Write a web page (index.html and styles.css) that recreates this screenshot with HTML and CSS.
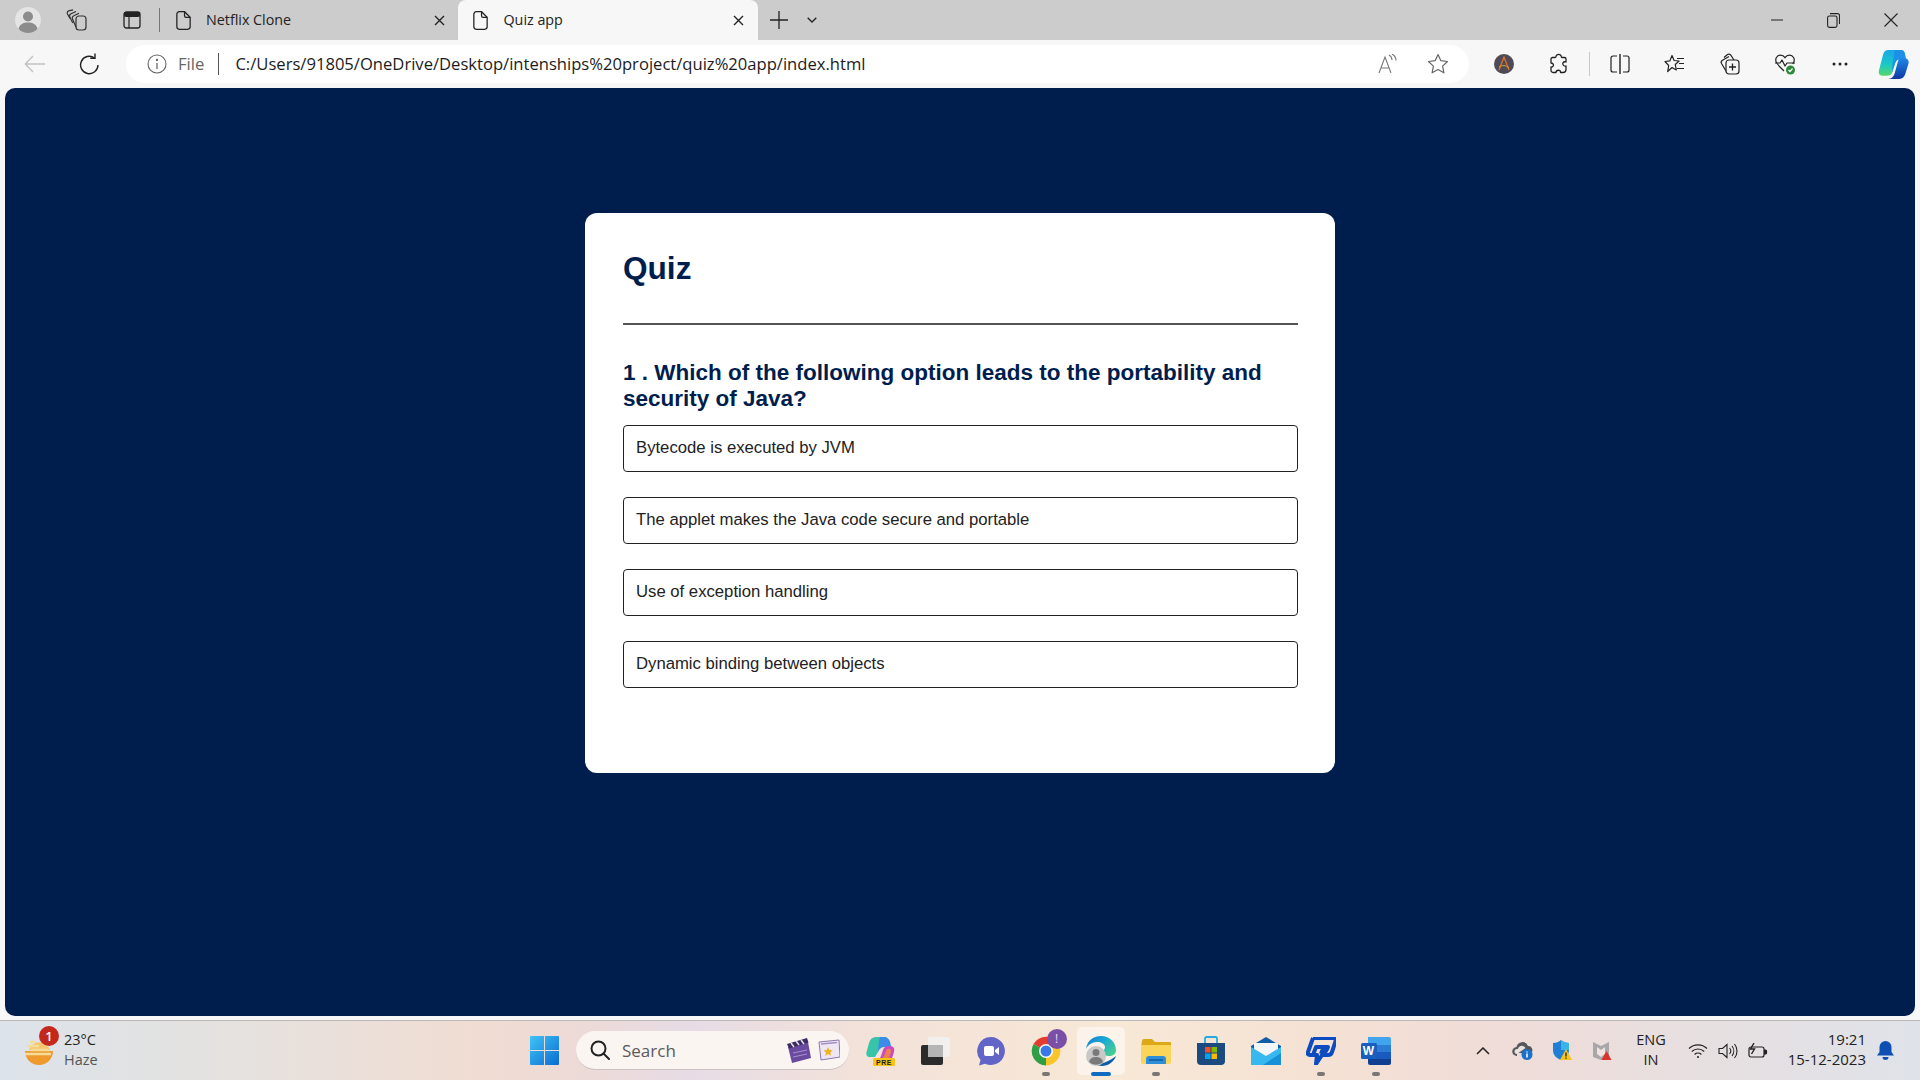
FILE: index.html
```html
<!DOCTYPE html>
<html lang="en">
<head>
<meta charset="utf-8">
<title>Quiz app</title>
<link rel="stylesheet" href="styles.css">
</head>
<body>
<div class="window">
  <header class="tabstrip">
    <div class="strip-tool profile-cell">
      <svg width="26" height="26" viewBox="0 0 26 26"><circle cx="13" cy="13" r="13" fill="#e4e4e4"/><circle cx="13" cy="9.5" r="5" fill="#8c8c8c"/><path d="M3.5 22c1-5 5-6.500 9.500-6.500s8.500 1.500 9.500 6.500c-2.500 2.500-6 4-9.500 4s-7-1.500-9.500-4z" fill="#8c8c8c"/></svg>
    </div>
    <div class="strip-tool coll-cell">
      <svg width="22" height="22" viewBox="0 0 22 22" fill="none" stroke="#333" stroke-width="1.200"><rect x="10" y="7" width="10" height="14" rx="3"/><path d="M10 18 6.500 10a2.500 2.500 0 0 1 1.300-3.300L13 4.300"/><path d="M6.800 14 3.800 8a2.500 2.500 0 0 1 1.200-3.300L10 2.500"/><path d="M4 9.500 1.500 5a2.500 2.500 0 0 1 1.200-3.200L7 .8"/></svg>
    </div>
    <div class="strip-tool vtab-cell">
      <svg width="18" height="18" viewBox="0 0 18 18"><rect x="1" y="1" width="16" height="16" rx="2.500" fill="none" stroke="#222" stroke-width="1.300"/><rect x="1" y="1" width="16" height="5" rx="2" fill="#222"/><path d="M6 6v11" stroke="#222" stroke-width="1.200"/></svg>
    </div>
    <div class="strip-sep"></div>
    <div class="tab">
      <svg class="doc" width="15" height="19" viewBox="0 0 14 18" fill="none" stroke="#222" stroke-width="1.200"><path d="M3 .7h5l5.300 5.300v9a2.300 2.300 0 0 1-2.300 2.300H3A2.300 2.300 0 0 1 .7 15V3A2.300 2.300 0 0 1 3 .7z"/><path d="M8 .7V4.500A1.500 1.500 0 0 0 9.500 6h3.800"/></svg>
      <span class="tab-title">Netflix Clone</span>
      <svg class="tab-close" width="11" height="11" viewBox="0 0 11 11" stroke="#222" stroke-width="1.400"><path d="M1 1l9 9M10 1l-9 9"/></svg>
    </div>
    <div class="tab tab-active">
      <svg class="doc" width="15" height="19" viewBox="0 0 14 18" fill="none" stroke="#222" stroke-width="1.200"><path d="M3 .7h5l5.300 5.300v9a2.300 2.300 0 0 1-2.300 2.300H3A2.300 2.300 0 0 1 .7 15V3A2.300 2.300 0 0 1 3 .7z"/><path d="M8 .7V4.500A1.500 1.500 0 0 0 9.500 6h3.800"/></svg>
      <span class="tab-title">Quiz app</span>
      <svg class="tab-close" width="11" height="11" viewBox="0 0 11 11" stroke="#222" stroke-width="1.400"><path d="M1 1l9 9M10 1l-9 9"/></svg>
    </div>
    <div class="strip-tool plus-cell">
      <svg width="18" height="18" viewBox="0 0 18 18" stroke="#222" stroke-width="1.300"><path d="M9 0v18M0 9h18"/></svg>
    </div>
    <div class="strip-tool chev-cell">
      <svg width="10" height="6" viewBox="0 0 10 6" fill="none" stroke="#222" stroke-width="1.300"><path d="M.7.7 5 5l4.300-4.300"/></svg>
    </div>
    <div class="strip-fill"></div>
    <div class="win-btn"><svg width="12" height="2" viewBox="0 0 12 2"><path d="M0 1h12" stroke="#222" stroke-width="1"/></svg></div>
    <div class="win-btn"><svg width="13" height="15" viewBox="0 0 13 15" fill="none" stroke="#222" stroke-width="1.100"><rect x=".6" y="3" width="9.400" height="11.400" rx="1.800"/><path d="M3 .6h7.500a2 2 0 0 1 2 2V11"/></svg></div>
    <div class="win-btn win-close"><svg width="14" height="14" viewBox="0 0 14 14" stroke="#222" stroke-width="1.100"><path d="M.5.5l13 13M13.500.5l-13 13"/></svg></div>
  </header>

  <nav class="toolbar">
    <div class="nav-btn"><svg width="22" height="18" viewBox="0 0 22 18" fill="none" stroke="#c2c2c2" stroke-width="1.400"><path d="M21 9H1.500M9 1 1.300 9 9 17"/></svg></div>
    <div class="nav-btn"><svg width="21" height="22" viewBox="0 0 21 22" fill="none" stroke="#222" stroke-width="1.400"><path d="M15.500 5A8.700 8.700 0 1 0 19 12"/><path d="M16 .5V5.200H11.300"/></svg></div>
    <div class="address">
      <svg class="info" width="20" height="20" viewBox="0 0 20 20" fill="none" stroke="#666" stroke-width="1.100"><circle cx="10" cy="10" r="9"/><path d="M10 9v6" stroke-width="1.300"/><circle cx="10" cy="6" r=".6" fill="#666"/></svg>
      <span class="addr-file">File</span>
      <span class="addr-sep"></span>
      <span class="addr-url">C:/Users/91805/OneDrive/Desktop/intenships%20project/quiz%20app/index.html</span>
      <span class="addr-fill"></span>
      <svg class="read-aloud" width="20" height="20" viewBox="0 0 20 20" fill="none" stroke="#777" stroke-width="1.100"><path d="M1 19 7 3l6 16M3 14h8"/><path d="M11 1c2 1 3 2.500 3 5M14 0c2.500 1.500 4 3.500 4 6.500"/></svg>
      <svg class="star" width="22" height="22" viewBox="0 0 22 22" fill="none" stroke="#666" stroke-width="1.200" stroke-linejoin="round"><path d="m11 1.500 2.900 6.200 6.600.8-4.900 4.600 1.300 6.700L11 16.500l-5.900 3.300 1.300-6.700-4.900-4.600 6.600-.8z"/></svg>
    </div>
    <div class="tool-btn">
      <svg width="20" height="20" viewBox="0 0 20 20"><circle cx="10" cy="10" r="10" fill="#4f4a55"/><path d="M5 16 10 3l5 13" fill="none" stroke="#d9742c" stroke-width="1.300"/><path d="M5 13c3-2 7-2 10 1" fill="none" stroke="#e0a030" stroke-width="1"/></svg>
    </div>
    <div class="tool-btn">
      <svg width="19" height="22" viewBox="0 0 19 22" fill="none" stroke="#222" stroke-width="1.300" stroke-linejoin="round"><path d="M7 3.500a2.700 2.700 0 0 1 5.300 0c0 .8 0 1 .7 1h2.500a1.500 1.500 0 0 1 1.500 1.500v3c-3-1-3.800 1.500-2.800 3 .7 1.100 1.500 1.400 2.800 1v3.500a3 3 0 0 1-3 3h-2.500c.5-3-4.500-3-4.500 0H4a2 2 0 0 1-2-2v-3.500c3 .5 3.500-4 0-4V6a1.500 1.500 0 0 1 1.500-1.500H6c.7 0 1 0 1-1z"/></svg>
    </div>
    <div class="tool-sep"></div>
    <div class="tool-btn">
      <svg width="20" height="20" viewBox="0 0 20 20" fill="none" stroke="#222" stroke-width="1.200"><path d="M7 2H3a2 2 0 0 0-2 2v12a2 2 0 0 0 2 2h4M13 2h4a2 2 0 0 1 2 2v12a2 2 0 0 1-2 2h-4"/><path d="M10 0v20" stroke-width="1.400"/></svg>
    </div>
    <div class="tool-btn">
      <svg width="21" height="21" viewBox="0 0 21 21" fill="none" stroke="#222" stroke-width="1.200" stroke-linejoin="round"><path d="M8 1.500l2.100 5 5 .5-3.800 3.500 1 5.500L8 13.500 3.700 17.500l1-6L1 7.500l4.900-.6z"/><path d="M13 4.500h7M15 9.500h5M13 14.500h7"/></svg>
    </div>
    <div class="tool-btn">
      <svg width="21" height="22" viewBox="0 0 21 22" fill="none" stroke="#222" stroke-width="1.200"><rect x="7" y="7" width="13" height="14" rx="3"/><path d="M13.500 10.500v7M10 14h7" stroke-width="1.300"/><path d="M7 18 2.500 10.500a2.500 2.500 0 0 1 1-3.300L10 3.500"/><path d="M5 4.500l3.500-3a2.500 2.500 0 0 1 3 .2L15 7"/></svg>
    </div>
    <div class="tool-btn health">
      <svg width="22" height="22" viewBox="0 0 22 22" fill="none" stroke="#222" stroke-width="1.200"><path d="M5 13 2.500 9.500C.5 6 3 2.200 6.500 2.200c2 0 3.500 1 4.500 2.500 1-1.500 2.500-2.500 4.500-2.500C19 2.200 21.500 6 19.500 9.500l-.8 1.500"/><path d="M1 10h5l2-3 3 6 2-3h8" stroke-linejoin="round"/><path d="M5 13l5 5"/><circle cx="16.500" cy="17" r="4.500" fill="#2a8a3a" stroke="none"/><path d="M14.500 17l1.500 1.500 2.500-3" stroke="#fff" stroke-width="1.200"/></svg>
    </div>
    <div class="tool-btn">
      <svg width="16" height="4" viewBox="0 0 16 4" fill="#222"><circle cx="2" cy="2" r="1.500"/><circle cx="8" cy="2" r="1.500"/><circle cx="14" cy="2" r="1.500"/></svg>
    </div>
    <div class="tool-btn copilot-cell">
      <svg width="31" height="31" viewBox="0 0 30 30">
        <defs>
          <linearGradient id="cp1" x1="0" y1="0" x2="0" y2="1"><stop offset="0" stop-color="#18a8e8"/><stop offset=".55" stop-color="#1ac8c8"/><stop offset="1" stop-color="#58d868"/></linearGradient>
          <linearGradient id="cp2" x1="0" y1="0" x2="0" y2="1"><stop offset="0" stop-color="#1e88e8"/><stop offset="1" stop-color="#1038a0"/></linearGradient>
        </defs>
        <path d="M10 1h12c2.500 0 3.500 1.500 4 3.500L27 10h-6c-2 0-3.500 1-4.500 4l-2.500 8c-.8 2.500-2.500 4-5 4H5c-3 0-5-2-4-5.500L5 5c.8-2.500 2.500-4 5-4z" fill="url(#cp1)"/>
        <path d="M16 1h6c2.500 0 3.500 1.500 4 3.500L27 10h-6c-2 0-3.500 1-4.500 4l-3 9 .5-8z" fill="#1e90e8"/>
        <path d="M22 9h3.500c3 0 4.800 2 4 5l-3 10c-.8 3-3 5-6 5H10c3 0 5-2 6-5l3-11c.5-2 1.500-4 3-4z" fill="url(#cp2)"/>
      </svg>
    </div>
  </nav>

  <main class="stage">
    <section class="card">
      <h1 class="quiz-title">Quiz</h1>
      <hr class="rule">
      <h2 class="question">1 . Which of the following option leads to the portability and security of Java?</h2>
      <ul class="options">
        <li class="option">Bytecode is executed by JVM</li>
        <li class="option">The applet makes the Java code secure and portable</li>
        <li class="option">Use of exception handling</li>
        <li class="option">Dynamic binding between objects</li>
      </ul>
    </section>
  </main>

  <footer class="taskbar">
    <div class="weather">
      <div class="weather-icon">
        <svg width="30" height="30" viewBox="0 0 30 30"><path d="M1 15h28a14 14 0 0 1-28 0z" fill="#ee9a2c"/><path d="M5 14a11 11 0 0 1 21 0z" fill="#f6c66a"/><path d="M3 10h12M7 14h18M1 18h26M6 6h6" stroke="#f6dc9a" stroke-width="2.500"/></svg>
        <span class="weather-badge">1</span>
      </div>
      <div class="weather-text"><span class="temp">23°C</span><span class="haze">Haze</span></div>
    </div>

    <div class="start">
      <svg width="29" height="29" viewBox="0 0 29 29">
        <defs><linearGradient id="win" x1="0" y1="0" x2="1" y2="1"><stop offset="0" stop-color="#3fc4f8"/><stop offset="1" stop-color="#0a6cd0"/></linearGradient></defs>
        <path d="M1 0h13v14H0V1a1 1 0 0 1 1-1zM15 0h13a1 1 0 0 1 1 1v13H15zM0 15h14v14H1a1 1 0 0 1-1-1zM15 15h14v13a1 1 0 0 1-1 1H15z" fill="url(#win)"/>
      </svg>
    </div>

    <div class="search">
      <svg width="20" height="20" viewBox="0 0 20 20" fill="none" stroke="#222" stroke-width="2"><circle cx="8.500" cy="8.500" r="7"/><path d="M13.500 13.500 19 19" stroke-linecap="round"/></svg>
      <span class="search-label">Search</span>
      <span class="search-fill"></span>
      <svg width="26" height="28" viewBox="0 0 26 28"><path d="M2 11 22 6l3 16-19 5z" fill="#6a4aa0"/><path d="M1 8 21 2l1.500 4.500L3 12.500z" fill="#3a2c60"/><path d="M5 7l3 4M10 5l3 4M15 4l3 4" stroke="#e8e0f0" stroke-width="1.500"/><path d="M7 17l14-3M7 21l14-3" stroke="#a890d0" stroke-width="1"/></svg>
      <svg class="news" width="22" height="22" viewBox="0 0 22 22"><path d="M1 3 21 1l1 17L3 21z" fill="#efe6f4" stroke="#8c78b0"/><path d="M3 5l16-1.500" stroke="#a090c0" stroke-width="1.500"/><path d="m10 8 1.500 3 3.300.3-2.500 2.200.8 3.200-3-1.700-2.800 1.900.6-3.300L5.500 11.500l3.300-.5z" fill="#f2b21c"/></svg>
    </div>

    <div class="apps">
      <div class="app">
        <svg width="30" height="30" viewBox="0 0 30 30">
          <path d="M10 1h8c3 0 5 2 6 5l1 5h-7c-3 0-5 2-6 5l-3 5H4c-3 0-4-2-3.500-5L3 7c1-4 3.500-6 7-6z" fill="#38c4a8"/>
          <path d="M14 1h4c3 0 5 2 6 5l1 5h-7c-3 0-5 2-6 5l1-11c.3-2 1-4 1-4z" fill="#3a8ce8"/>
          <path d="M22 10h2c3 0 5 2 4 6l-2 6c-1 2-3 3-5 3H9c3 0 5-2 6-5l2-6c1-3 3-4 5-4z" fill="#c84cc0"/>
          <path d="M21 13c3-1 4 0 4 3l-2 6h-6z" fill="#f08050"/>
          <rect x="7" y="22" width="22" height="8" rx="1.500" fill="#f5c518"/>
          <text class="pre" x="18" y="28.700" text-anchor="middle">PRE</text>
        </svg>
      </div>
      <div class="app">
        <svg width="30" height="30" viewBox="0 0 30 30"><rect x="0" y="9" width="22" height="20" rx="2" fill="#2b2b2b"/><rect x="7" y="1" width="22" height="20" rx="2" fill="#f2f0ee"/><rect x="7" y="9" width="15" height="12" fill="#b5b5b5"/></svg>
      </div>
      <div class="app">
        <svg width="30" height="30" viewBox="0 0 30 30"><path d="M15 1a14 14 0 1 1-6 26.700L3 29.500l1.500-5.500A14 14 0 0 1 15 1z" fill="#6364c8"/><rect x="8" y="10" width="10" height="10" rx="2" fill="#fff"/><path d="m19 14 4-3v8l-4-3z" fill="#fff"/></svg>
      </div>
      <div class="app app-chrome">
        <span class="chrome-wrap">
          <svg width="30" height="30" viewBox="0 0 30 30"><path d="M15 15 2.500 8A14.500 14.500 0 0 1 27.600 8z" fill="#e33b2e"/><path d="M15 15 27.600 8A14.500 14.500 0 0 1 15 29.500z" fill="#f7c62b"/><path d="M15 15v14.500A14.500 14.500 0 0 1 2.500 8z" fill="#2f9e44"/><circle cx="15" cy="15" r="7" fill="#fff"/><circle cx="15" cy="15" r="5.500" fill="#3b78e7"/></svg>
          <span class="chrome-badge">!</span>
        </span>
        <i class="run-dot"></i>
      </div>
      <div class="app app-edge">
        <span class="chrome-wrap">
          <svg width="32" height="32" viewBox="0 0 32 32">
            <defs><linearGradient id="edge" x1="0" y1="0" x2="1" y2=".8"><stop offset="0" stop-color="#1878c8"/><stop offset=".45" stop-color="#18a8d8"/><stop offset="1" stop-color="#48d090"/></linearGradient></defs>
            <path d="M1 14C2 6 8 1 16 1c8 0 15 6 15 14 0 4-3 6-7 6-3 0-6-1-6-4 0-2 2-2 2-5 0-3-4-5-8-5C7 7 3 10 1 14z" fill="url(#edge)"/>
            <path d="M31 21c-2 6-8 10-14 10-3 0-6-1-8-3 7 2 14-1 22-7z" fill="#0c5fa8"/>
            <circle cx="11" cy="21" r="10" fill="#c8c8c8"/><circle cx="11" cy="17.500" r="3.500" fill="#7a7a7a"/><path d="M4 27c1-4 4-5 7-5s6 1 7 5a10 10 0 0 1-14 0z" fill="#7a7a7a"/>
          </svg>
        </span>
        <i class="run-bar"></i>
      </div>
      <div class="app">
        <svg width="30" height="26" viewBox="0 0 30 26"><path d="M1 3a2 2 0 0 1 2-2h8l3 3h15a1 1 0 0 1 1 1v4H0z" fill="#dca818"/><path d="M0 7h30v17a2 2 0 0 1-2 2H2a2 2 0 0 1-2-2z" fill="#fbd55a"/><path d="M5 26v-5a3 3 0 0 1 3-3h14a3 3 0 0 1 3 3v5z" fill="#2e8ed8"/><path d="M8 22h14" stroke="#0f5aa0" stroke-width="1.500"/></svg>
        <i class="run-dot"></i>
      </div>
      <div class="app">
        <svg width="30" height="30" viewBox="0 0 30 30"><path d="M9 7V2.500A1.500 1.500 0 0 1 10.500 1h9A1.500 1.500 0 0 1 21 2.500V7" fill="none" stroke="#28a8e0" stroke-width="1.800"/><path d="M1 7h28v18a4 4 0 0 1-4 4H5a4 4 0 0 1-4-4z" fill="#1b4a80"/><rect x="9" y="11" width="5.500" height="5.500" fill="#f25022"/><rect x="15.500" y="11" width="5.500" height="5.500" fill="#7fba00"/><rect x="9" y="17.500" width="5.500" height="5.500" fill="#00a4ef"/><rect x="15.500" y="17.500" width="5.500" height="5.500" fill="#ffb900"/></svg>
      </div>
      <div class="app">
        <svg width="30" height="28" viewBox="0 0 30 28"><path d="M15 0 30 9v19H0V9z" fill="#0f5ca8"/><path d="M3 6h24v8l-12 7-12-7z" fill="#f3f6f8"/><path d="M0 10l15 9 15-9v18H0z" fill="#37b8ee"/><path d="M30 28H12l18-12z" fill="#1790d8"/></svg>
      </div>
      <div class="app">
        <svg width="30" height="28" viewBox="0 0 30 28"><path d="M7 1h20c2 0 3 1.500 2.500 3.500L26 15c-.5 2-2 3-4 3h-6l-6 9 1-9H7l3-8h12l-2 4h-4l-1 3" fill="none" stroke="#0c4cc0" stroke-width="4" stroke-linejoin="round"/><path d="M7 1 2 15c-.7 2 0 3 2 3h7" fill="none" stroke="#0c4cc0" stroke-width="4" stroke-linejoin="round"/></svg>
        <i class="run-dot"></i>
      </div>
      <div class="app">
        <span class="word">
          <svg width="30" height="28" viewBox="0 0 30 28"><path d="M7 0h21a2 2 0 0 1 2 2v6H7z" fill="#41a5ee"/><rect x="7" y="8" width="23" height="7" fill="#2b7cd3"/><rect x="7" y="15" width="23" height="7" fill="#185abd"/><path d="M7 22h23v4a2 2 0 0 1-2 2H9a2 2 0 0 1-2-2z" fill="#103f91"/><rect x="0" y="6" width="16" height="16" rx="1.500" fill="#1a5fbf"/></svg>
          <b class="word-w">W</b>
        </span>
        <i class="run-dot"></i>
      </div>
    </div>

    <div class="tray">
      <div class="tray-chev"><svg width="14" height="8" viewBox="0 0 14 8" fill="none" stroke="#222" stroke-width="1.500"><path d="M1 7l6-6 6 6"/></svg></div>
      <div class="tray-item"><svg width="21" height="19" viewBox="0 0 21 19"><path d="M5 15a4.500 4.500 0 0 1-.5-9A6 6 0 0 1 16 5a4 4 0 0 1 3 7H5z" fill="#55575a"/><path d="M5 13a2.500 2.500 0 0 1 0-5c1 0 1-.5 1.500-1.500a4 4 0 0 1 7 .5" fill="#e8e2de"/><circle cx="15" cy="13.500" r="5.500" fill="#1a70c8"/><path d="M15 12.500v4M15 10.500v1" stroke="#fff" stroke-width="1.500"/></svg></div>
      <div class="tray-item"><svg width="20" height="21" viewBox="0 0 20 21"><path d="M9 0c2 2 5 3 8 3v7c0 5-3 8-8 10-5-2-8-5-8-10V3c3 0 6-1 8-3z" fill="#1f7fd4"/><path d="M9 0c2 2 5 3 8 3v7H9z" fill="#39b4e8"/><path d="M14 9l6 11H8z" fill="#f7c31c"/><path d="M14 12.500v4M14 17.500v1.200" stroke="#222" stroke-width="1.300"/></svg></div>
      <div class="tray-item"><svg width="20" height="20" viewBox="0 0 20 20"><path d="M1 1l8 4 8-4v15l-8 3-8-3z" fill="#a8a8a8"/><path d="M5 6l4 3 4-3v7l-4 3-4-3z" fill="#f0e4e0"/><path d="M14.500 10l5 9h-10z" fill="#d8332c"/></svg></div>
      <div class="lang"><span>ENG</span><span>IN</span></div>
      <div class="tray-item sys"><svg width="20" height="16" viewBox="0 0 20 16" fill="none" stroke="#222" stroke-width="1.200"><path d="M1 5.500a13 13 0 0 1 18 0M3.800 8.500a9 9 0 0 1 12.400 0M6.600 11.500a5 5 0 0 1 6.800 0"/><circle cx="10" cy="14" r="1" fill="#222" stroke="none"/></svg></div>
      <div class="tray-item sys"><svg width="21" height="16" viewBox="0 0 21 16" fill="none" stroke="#222" stroke-width="1.100"><path d="M1 5.500h3.500L9 1.500v13l-4.500-4H1z"/><path d="M11.500 5a4.500 4.500 0 0 1 0 6M14 3a8 8 0 0 1 0 10M16.500 1a11 11 0 0 1 0 14"/></svg></div>
      <div class="tray-item sys"><svg width="20" height="16" viewBox="0 0 20 16" fill="none" stroke="#222" stroke-width="1.200"><rect x="1" y="4" width="15" height="10" rx="2"/><path d="M16 7h1.500a1 1 0 0 1 1 1v2a1 1 0 0 1-1 1H16" fill="#222"/><path d="M6 0 2.500 6h4L3.500 11" stroke="#222" stroke-width="1.400"/></svg></div>
      <div class="clock"><span>19:21</span><span>15-12-2023</span></div>
      <div class="bell"><svg width="17" height="20" viewBox="0 0 17 20" fill="#0f4fb4"><path d="M8.500 0a6 6 0 0 1 6 6v5l2.500 3.500H0L2.500 11V6a6 6 0 0 1 6-6z"/><path d="M5.500 16h6a3 3 0 0 1-6 0z"/></svg></div>
    </div>
  </footer>
</div>
</body>
</html>
```
FILE: styles.css
```css
* { box-sizing: border-box; }
html, body { margin: 0; height: 100%; }
body { font-family: "Open Sans", "Noto Sans", sans-serif; color: #1f1f1f; overflow: hidden; }

.window { width: 1920px; height: 1080px; display: flex; flex-direction: column; background: #f7f7f7; }

/* Tab strip */
.tabstrip { height: 40px; background: #cccccc; display: flex; align-items: stretch; flex: none; }
.strip-tool { display: flex; align-items: center; justify-content: center; flex: none; }
.profile-cell { width: 56px; }
.coll-cell { width: 42px; margin-right: 6px; }
.vtab-cell { width: 56px; }
.strip-sep { width: 1px; height: 24px; align-self: center; background: #777; margin-left: -1px; margin-right: 8px; }
.tab { width: 288.500px; display: flex; align-items: center; padding: 0 12px 0 8px; font-size: 14.300px; flex: none; }
.tab .doc { margin-right: 15px; flex: none; }
.tab-title { flex: 1; color: #222; margin-top: -2px; }
.tab-active { width: 300px; margin-left: 1px; background: #f7f7f7; border-radius: 8px 8px 0 0; padding: 0 14px 0 15px; }
.tab-active .doc { margin-right: 16px; }
.plus-cell { width: 42px; }
.chev-cell { width: 24px; }
.strip-fill { flex: 1; }
.win-btn { width: 57px; display: flex; align-items: center; justify-content: center; flex: none; }
.win-close { width: 58px; }

/* Toolbar */
.toolbar { height: 48px; display: flex; align-items: center; background: #f7f7f7; flex: none; }
.nav-btn { width: 55px; display: flex; justify-content: center; flex: none; }
.nav-btn:first-child { margin-left: 7px; }
.address { width: 1343px; height: 38px; margin-left: 9px; margin-right: 7px; flex: none; background: #fff; border-radius: 19px; display: flex; align-items: center; padding-left: 21px; }
.info { flex: none; margin-right: 11px; }
.addr-file { color: #666; font-size: 16.700px; margin-top: -2px; }
.addr-sep { width: 1px; height: 22px; background: #555; margin: 0 16px 0 14px; flex: none; }
.addr-url { color: #1c1c1c; font-size: 16.600px; white-space: nowrap; margin-top: -2px; }
.addr-fill { flex: 1; }
.read-aloud { margin-right: 29px; flex: none; }
.star { margin-right: 20px; flex: none; }
.tool-btn { width: 55px; display: flex; align-items: center; justify-content: center; flex: none; }
.tool-sep { width: 1px; height: 24px; background: #c8c8c8; margin: 0 2px 0 3px; flex: none; }
.copilot-cell { width: 53px; }

/* Page */
.stage { flex: 1; margin: 0 5px 4px; background: #001e4d; border-radius: 10px; display: flex; justify-content: center; align-items: flex-start; padding-top: 125px; }
.card { width: 750px; height: 560px; background: #fff; border-radius: 12px; padding: 37px 37px 37px 38px; font-family: "Liberation Sans", Arial, sans-serif; }
.quiz-title { margin: 0; font-size: 31.600px; line-height: 37px; font-weight: 700; color: #001e4d; }
.rule { height: 2px; margin: 36px 0 0; border: 0; background: #555; }
.question { margin: 35px 0 0; font-size: 22.500px; line-height: 26px; font-weight: 700; color: #001e4d; }
.options { list-style: none; margin: 13px 0 0; padding: 0; display: flex; flex-direction: column; gap: 25px; }
.option { height: 47px; border: 1px solid #222; border-radius: 4px; padding: 0 12px 2px; display: flex; align-items: center; font-size: 16.700px; color: #222; }

/* Taskbar */
.taskbar { height: 60px; flex: none; border-top: 1px solid #bdb8b6; display: flex; align-items: center; background: linear-gradient(90deg, #dce3ea 0%, #e5e2df 12%, #f0dcd2 25%, #ecdad8 31%, #e7dce6 36%, #f3e2d9 45%, #f8e8d6 58%, #f5e2d4 68%, #f0dcd8 78%, #e7dfe0 88%, #dfe3e9 100%); }
.weather { width: 173px; padding-left: 24px; display: flex; align-items: center; flex: none; }
.weather-icon { width: 30px; height: 30px; position: relative; flex: none; margin-right: 10px; }
.weather-badge { position: absolute; left: 15px; top: -10px; width: 20px; height: 20px; border-radius: 50%; background: #c4281c; color: #fff; font-size: 13px; font-weight: 600; line-height: 20px; text-align: center; }
.weather-text { display: flex; flex-direction: column; font-size: 14.500px; line-height: 20px; margin-top: -2px; }
.temp { color: #222; }
.haze { color: #555; }
.start { padding-left: 357px; display: flex; align-items: center; flex: none; }
.search { width: 273px; height: 39px; margin-left: 17px; border-radius: 20px; background: #fbf5f2; border-bottom: 1px solid #c9c2c0; display: flex; align-items: center; padding: 0 9px 0 14px; flex: none; }
.search-label { margin-left: 12px; font-size: 17px; color: #5a5a5a; }
.search-fill { flex: 1; }
.news { margin-left: 6px; }
.apps { display: flex; margin-left: 4px; flex: none; }
.app { width: 55px; height: 48px; display: flex; align-items: center; justify-content: center; position: relative; flex: none; }
.app-edge { background: rgba(255, 255, 255, .5); border-radius: 5px; width: 48px; margin: 0 3.500px; }
.pre { font-family: "Liberation Sans", sans-serif; font-size: 7px; font-weight: 700; fill: #222; letter-spacing: .5px; }
.chrome-wrap, .word { position: relative; display: block; line-height: 0; }
.chrome-badge { position: absolute; right: -6px; top: -7px; width: 20px; height: 20px; border-radius: 50%; background: #7b4fa8; color: #e8dcef; font-size: 12px; line-height: 20px; text-align: center; }
.run-dot { position: absolute; left: 50%; bottom: -1px; width: 8px; height: 4px; margin-left: -4px; border-radius: 2px; background: #7a7675; }
.run-bar { position: absolute; left: 50%; bottom: -1px; width: 20px; height: 4px; margin-left: -10px; border-radius: 2px; background: #0f6cc0; }
.word-w { position: absolute; left: 0; top: 6px; width: 16px; height: 16px; color: #fff; font: 700 12px/16px "Liberation Sans", sans-serif; text-align: center; }
.tray { flex: 1; display: flex; align-items: center; margin-left: 73px; }
.tray-chev { width: 14px; display: flex; justify-content: center; margin-right: 12px; }
.tray-item { width: 40px; display: flex; justify-content: center; flex: none; }
.tray-item.sys { width: 30px; }
.lang { width: 56px; margin-left: 1px; margin-right: 4px; margin-top: -2px; display: flex; flex-direction: column; align-items: center; font-size: 14.500px; line-height: 20px; color: #222; flex: none; }
.clock { width: 85px; margin-left: 8px; margin-top: -4px; display: flex; flex-direction: column; align-items: flex-end; font-size: 15px; line-height: 20px; color: #222; flex: none; }
.bell { margin-left: 11px; display: flex; flex: none; }
```
